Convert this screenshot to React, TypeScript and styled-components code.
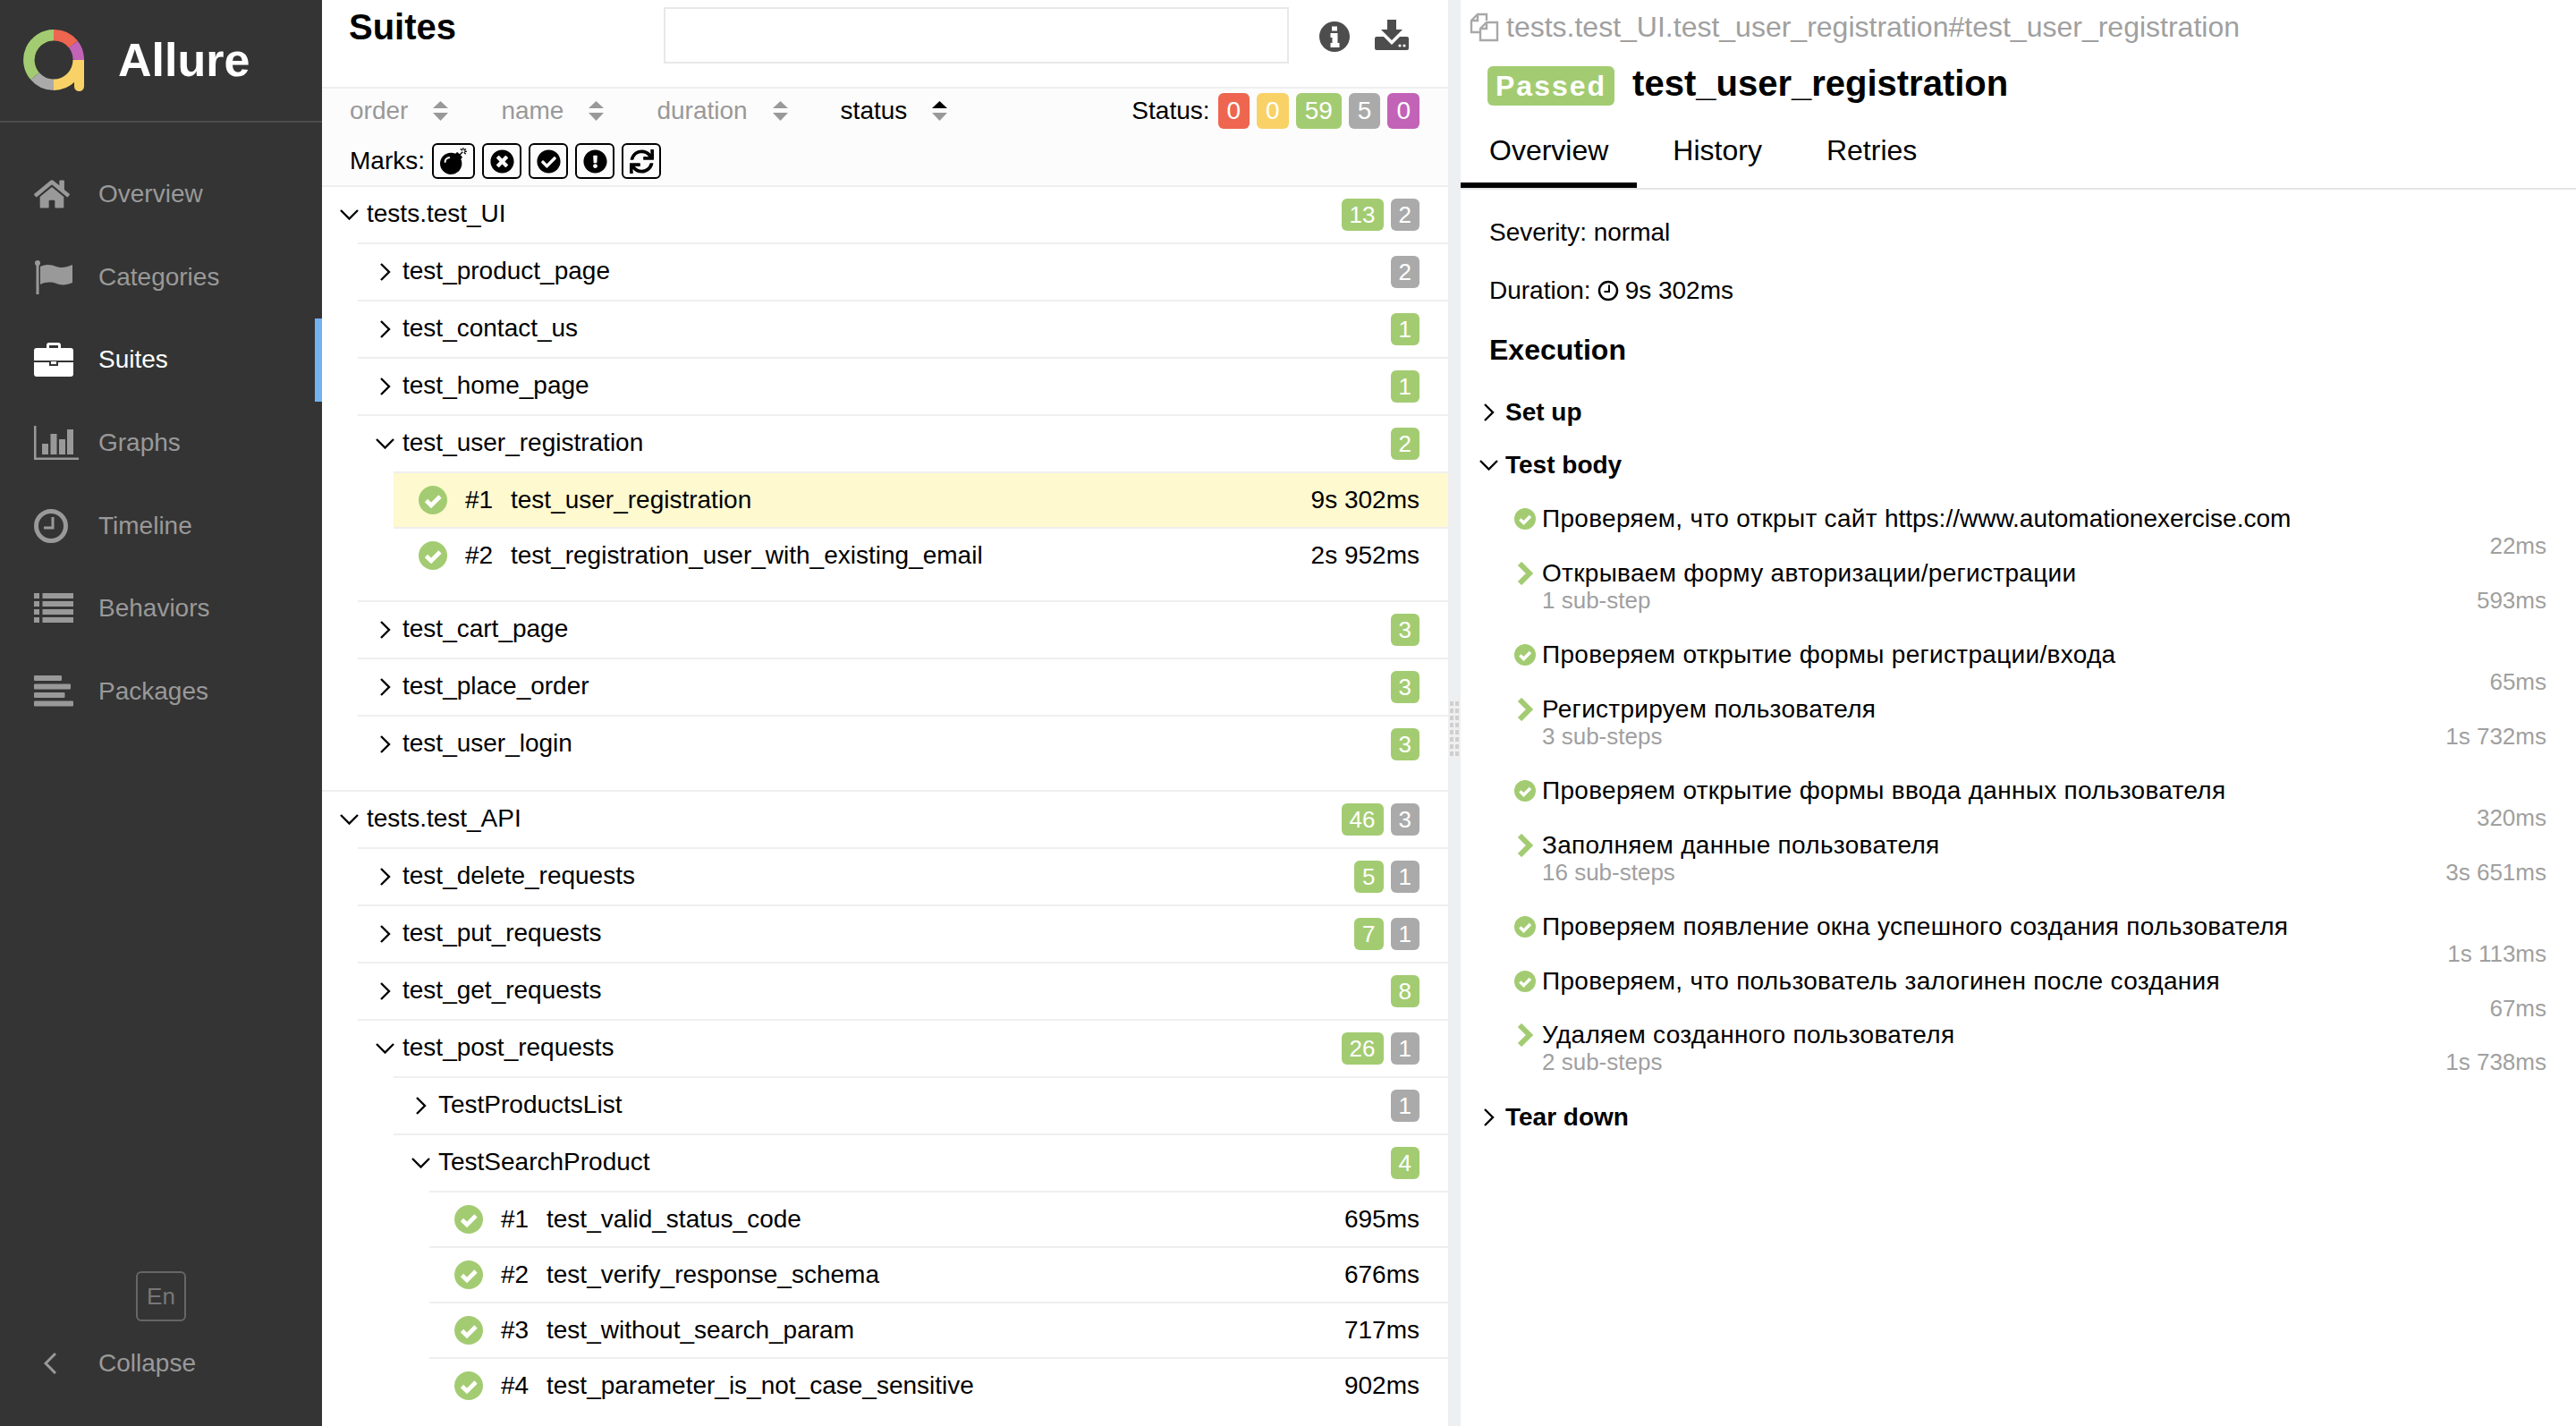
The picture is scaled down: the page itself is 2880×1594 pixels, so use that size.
import React from "react";
import styled, { createGlobalStyle } from "styled-components";
import {
  FaBomb,
  FaCheckCircle,
  FaExclamationCircle,
  FaHome,
  FaSync,
  FaTimesCircle
} from "react-icons/fa";

const GREEN = "#a3cc72";
const GREY = "#aaaaaa";
const RED = "#ee6650";
const YELLOW = "#f9d267";
const PURPLE = "#c263b8";
const LINE = "#efefef";

const GlobalStyle = createGlobalStyle`
  html, body {
    margin: 0;
    padding: 0;
    background: #fff;
  }
  body {
    font-family: "Liberation Sans", Arial, sans-serif;
    font-size: 28px;
    color: #000;
  }
`;

const Page = styled.div`
  display: flex;
  width: 2880px;
  height: 1594px;
  overflow: hidden;
`;

/* side menu */
const Sidebar = styled.aside`
  flex: 0 0 360px;
  display: flex;
  flex-direction: column;
  background: #343434;
  color: #999;
`;

const Brand = styled.div`
  display: flex;
  align-items: center;
  height: 135px;
  padding-left: 26px;
  border-bottom: 2px solid #4c4c4c;
`;

const BrandName = styled.span`
  margin-left: 38px;
  margin-bottom: 2px;
  font-size: 52px;
  font-weight: bold;
  color: #fff;
`;

const Nav = styled.nav`
  padding-top: 34px;
`;

const NavItem = styled.div<{ $active?: boolean }>`
  display: flex;
  align-items: center;
  height: 92.6px;
  box-sizing: border-box;
  padding-left: 38px;
  color: ${p => (p.$active ? "#fff" : "#999")};
  border-right: 8px solid ${p => (p.$active ? "#73b2ef" : "transparent")};
`;

const NavIcon = styled.span`
  display: flex;
  align-items: center;
  width: 72px;
  svg {
    display: block;
  }
`;

const SideFooter = styled.div`
  margin-top: auto;
  padding-bottom: 47px;
`;

const Lang = styled.div`
  width: 56px;
  height: 56px;
  box-sizing: border-box;
  margin: 0 0 24px 152px;
  display: flex;
  align-items: center;
  justify-content: center;
  border: 2px solid #666;
  border-radius: 6px;
  color: #777;
  font-size: 26px;
`;

const Collapse = styled.div`
  display: flex;
  align-items: center;
  height: 46px;
  padding-left: 49px;
  svg {
    margin-right: 47px;
  }
`;

/* suites tree */
const TreePane = styled.section`
  flex: 0 0 1259px;
  overflow: hidden;
`;

const PaneHead = styled.header`
  display: flex;
  align-items: flex-start;
  height: 89px;
  padding: 8px 0 0 30px;
`;

const PaneTitle = styled.h2`
  width: 352px;
  margin: 0;
  font-size: 40px;
  line-height: 44px;
  font-weight: bold;
`;

const Search = styled.input`
  width: 699px;
  height: 63px;
  box-sizing: border-box;
  padding: 0;
  border: 2px solid #e8e8e8;
  background: #fff;
  outline: none;
`;

const HeadIcon = styled.span<{ $left: number; $top: number }>`
  display: block;
  margin-left: ${p => p.$left}px;
  margin-top: ${p => p.$top}px;
  svg {
    display: block;
  }
`;

const Filters = styled.div`
  height: 108px;
  padding: 0 32px 0 31px;
  background: #fcfcfc;
  border-top: 2px solid ${LINE};
`;

const SortRow = styled.div`
  display: flex;
  align-items: center;
  height: 50px;
`;

const MarksRow = styled.div`
  display: flex;
  align-items: center;
  height: 40px;
  margin-top: 11px;
`;

const SortItem = styled.span<{ $active?: boolean }>`
  display: flex;
  align-items: center;
  margin-right: 59px;
  color: ${p => (p.$active ? "#000" : "#999")};
  svg {
    margin-left: 28px;
  }
`;

const StatusLabel = styled.span`
  margin-left: auto;
  margin-right: 1px;
`;

const StatusBadge = styled.span<{ $color: string }>`
  height: 40px;
  padding: 0 10px;
  margin-left: 8px;
  border-radius: 6px;
  background: ${p => p.$color};
  color: #fff;
  line-height: 40px;
`;

const MarkButton = styled.span<{ $wide?: boolean }>`
  display: flex;
  align-items: center;
  justify-content: center;
  width: ${p => (p.$wide ? 48 : 44)}px;
  height: 40px;
  box-sizing: border-box;
  margin-left: 8px;
  border: 2px solid #000;
  border-radius: 6px;
`;

const Row = styled.div`
  display: flex;
  align-items: center;
  height: 62px;
  padding-right: 32px;
  border-top: 2px solid ${LINE};
`;

const Caret = styled.span`
  display: flex;
  justify-content: center;
  width: 40px;
  margin-left: 10px;
  svg {
    display: block;
  }
`;

const RowName = styled.span`
  margin-right: auto;
  margin-top: -2px;
`;

const Counter = styled.span<{ $color: string }>`
  height: 36px;
  padding: 0 9px;
  margin-left: 8px;
  border-radius: 6px;
  background: ${p => p.$color};
  color: #fff;
  font-size: 26px;
  line-height: 36px;
`;

const Children = styled.div`
  margin: 0 0 20px 40px;
`;

const TestRow = styled.div<{ $selected?: boolean }>`
  display: flex;
  align-items: center;
  height: 60px;
  padding: 0 32px 0 28px;
  border-top: 2px solid ${LINE};
  background: ${p => (p.$selected ? "#fef9cf" : "transparent")};
`;

const TestOrder = styled.span`
  width: 51px;
  margin-left: 20px;
`;

const TestTime = styled.span`
  margin-left: auto;
`;

const Gutter = styled.div`
  position: relative;
  flex: 0 0 14px;
  background: #eeeff1;
`;

const Grip = styled.div`
  position: absolute;
  top: 784px;
  left: 2px;
  width: 10px;
  height: 61px;
  background-image: linear-gradient(#cfcfcf 5px, transparent 5px),
    linear-gradient(#cfcfcf 5px, transparent 5px);
  background-size: 4px 8px;
  background-position: 0 0, 6px 0;
  background-repeat: repeat-y;
`;

/* test result */
const Result = styled.section`
  flex: 1;
  min-width: 0;
`;

const Path = styled.div`
  display: flex;
  align-items: center;
  height: 60px;
  padding-left: 10px;
  color: #a0a0a0;
  font-size: 32px;
  svg {
    margin-right: 8px;
  }
`;

const ResultHead = styled.div`
  display: flex;
  align-items: center;
  height: 44px;
  margin-top: 14px;
  padding-left: 30px;
`;

const Passed = styled.span`
  height: 44px;
  box-sizing: border-box;
  padding: 0 9px;
  border-radius: 6px;
  background: ${GREEN};
  color: #fff;
  font-size: 32px;
  font-weight: bold;
  letter-spacing: 2px;
  line-height: 44px;
`;

const ResultName = styled.h2`
  margin: -5px 0 0 20px;
  font-size: 40px;
  font-weight: bold;
`;

const Tabs = styled.div`
  display: flex;
  height: 94px;
  box-sizing: border-box;
  border-bottom: 2px solid #e3e4e6;
`;

const Tab = styled.div<{ $active?: boolean }>`
  height: 92px;
  box-sizing: border-box;
  padding: 30px 32px 0;
  margin-right: 8px;
  font-size: 32px;
  line-height: 40px;
  border-bottom: 6px solid ${p => (p.$active ? "#000" : "transparent")};
`;

const Overview = styled.div`
  padding: 15px 33px 0 32px;
`;

const Fact = styled.div`
  height: 65px;
  display: flex;
  align-items: center;
  svg {
    margin: 0 7px;
  }
`;

const SectionTitle = styled.h3`
  margin: 14px 0 34px;
  height: 40px;
  font-size: 32px;
  line-height: 40px;
  font-weight: bold;
`;

const Stage = styled.div`
  display: flex;
  align-items: center;
  height: 31px;
  margin: 0 0 28px -20px;
  font-weight: bold;
  svg {
    display: block;
  }
`;

const StageCaret = styled.span`
  display: flex;
  justify-content: center;
  width: 38px;
`;

const Steps = styled.div`
  margin-top: -27px;
  padding: 29px 0 0 27px;
`;

const Step = styled.div<{ $hasSub?: boolean }>`
  margin-bottom: ${p => (p.$hasSub ? 31 : 0)}px;
`;

const StepTitle = styled.div`
  display: flex;
  align-items: center;
  height: 30.5px;
  letter-spacing: 0.3px;
`;

const StepUrl = styled.span`
  letter-spacing: 0;
`;

const StepMark = styled.span`
  display: flex;
  justify-content: center;
  width: 26px;
  margin-right: 6px;
  svg {
    display: block;
  }
`;

const StepMeta = styled.div`
  display: flex;
  justify-content: space-between;
  align-items: center;
  height: 30px;
  padding-left: 32px;
  color: #a0a0a0;
  font-size: 26px;
`;

const Chevron = ({ open }: { open?: boolean }) =>
  open ? (
    <svg width="21" height="12" viewBox="0 0 21 12">
      <path d="M1 1l9.500 9.500L20 1" fill="none" stroke="#000" strokeWidth="2.400" />
    </svg>
  ) : (
    <svg width="13" height="20" viewBox="0 0 13 20">
      <path d="M2 1l9 9-9 9" fill="none" stroke="#000" strokeWidth="2.400" />
    </svg>
  );

const SortArrows = ({ active }: { active?: boolean }) => (
  <svg width="17" height="22" viewBox="0 0 17 22">
    <path d="M8.500 0L17 8H0z" fill={active ? "#000" : "#999"} />
    <path d="M0 13h17l-8.500 9z" fill="#999" />
  </svg>
);

const PassIcon = ({ size }: { size: number }) => (
  <svg width={size} height={size} viewBox="0 0 32 32">
    <circle cx="16" cy="16" r="16" fill={GREEN} />
    <path d="M8.500 16.500l5.500 5.500 10-10" fill="none" stroke="#fff" strokeWidth="4.600" />
  </svg>
);

const Logo = () => (
  <svg width="68" height="69" viewBox="0 0 68 69">
    <g fill="none" strokeWidth="12.500">
      <path d="M34 6.250A27.750 27.750 0 0 1 56 16.500" stroke={RED} />
      <path d="M56 16.500A27.750 27.750 0 0 1 61.750 34" stroke={PURPLE} />
      <path d="M61.750 34A27.750 27.750 0 0 1 34 61.750" stroke={YELLOW} />
      <path d="M34 61.750A27.750 27.750 0 0 1 13 52" stroke={GREY} />
      <path d="M13 52A27.750 27.750 0 0 1 34 6.250" stroke={GREEN} />
    </g>
    <path d="M57 34h11v29.500a5.500 5.500 0 0 1-11 0z" fill={YELLOW} />
  </svg>
);

const FlagIcon = () => (
  <svg width="44" height="38" viewBox="0 0 44 38" fill="#999">
    <circle cx="4" cy="3" r="3" />
    <rect x="2.500" y="3" width="3" height="35" />
    <path d="M7 7c7-3 13-2 18 0s11 1 18-2v20c-7 3-13 3-18 1S13 24 7 27z" />
  </svg>
);

const BriefcaseIcon = () => (
  <svg width="44" height="38" viewBox="0 0 44 38" fill="#fff">
    <path d="M14 7V3a3 3 0 0 1 3-3h10a3 3 0 0 1 3 3v4h-3V3H17v4z" />
    <path d="M3 6h38a3 3 0 0 1 3 3v11H0V9a3 3 0 0 1 3-3z" />
    <path d="M0 22h17v4h10v-4h17v13a3 3 0 0 1-3 3H3a3 3 0 0 1-3-3z" />
    <rect x="19" y="21" width="6" height="3" />
  </svg>
);

const ChartIcon = () => (
  <svg width="50" height="38" viewBox="0 0 50 38" fill="#999">
    <rect x="0" y="0" width="2.500" height="38" />
    <rect x="0" y="35.500" width="50" height="2.500" />
    <rect x="9" y="20" width="7" height="12" />
    <rect x="18.500" y="9" width="7" height="23" />
    <rect x="28" y="15" width="7" height="17" />
    <rect x="37" y="4" width="7" height="28" />
  </svg>
);

const ClockIcon = () => (
  <svg width="38" height="38" viewBox="0 0 38 38" fill="none" stroke="#999">
    <circle cx="19" cy="19" r="16.500" strokeWidth="5" />
    <path d="M21 9v12H11" strokeWidth="3" />
  </svg>
);

const ListIcon = () => (
  <svg width="44" height="35" viewBox="0 0 44 35" fill="#999">
    {[0, 9, 18, 27].map(y => (
      <g key={y}>
        <rect x="0" y={y} width="6" height="6" />
        <rect x="9.500" y={y} width="34.500" height="6" />
      </g>
    ))}
  </svg>
);

const PackagesIcon = () => (
  <svg width="44" height="35" viewBox="0 0 44 35" fill="#999">
    <rect x="0" y="0" width="31" height="6" rx="1" />
    <rect x="0" y="9.500" width="41" height="6" rx="1" />
    <rect x="0" y="19" width="34.500" height="6" rx="1" />
    <rect x="0" y="28.500" width="44" height="6" rx="1" />
  </svg>
);

const InfoIcon = () => (
  <svg width="34" height="34" viewBox="0 0 34 34">
    <circle cx="17" cy="17" r="17" fill="#4d4d4d" />
    <path
      d="M14 5.500h6v5h-6zM12.500 13h8v11h2v5h-10v-5h2v-6h-2z"
      fill="#fff"
    />
  </svg>
);

const DownloadIcon = () => (
  <svg width="38" height="34" viewBox="0 0 38 34" fill="#4d4d4d">
    <path d="M14 0h10v11h7L19 23 7 11h7z" />
    <path d="M2 19h8l9 9 9-9h8a2 2 0 0 1 2 2v11a2 2 0 0 1-2 2H2a2 2 0 0 1-2-2V21a2 2 0 0 1 2-2z" />
    <circle cx="28" cy="29" r="1.600" fill="#fff" />
    <circle cx="33" cy="29" r="1.600" fill="#fff" />
  </svg>
);

const CopyIcon = () => (
  <svg width="33" height="33" viewBox="0 0 33 33" fill="none" stroke="#a8a8a8" strokeWidth="2.400">
    <path d="M19 9V2H9L2 9v13h9" />
    <path d="M9 2v7H2" />
    <path d="M31 11v20H12V18l7-7z" fill="#fff" />
    <path d="M19 11v7h-7" />
  </svg>
);

const SmallClock = () => (
  <svg width="24" height="24" viewBox="0 0 24 24" fill="none" stroke="#000">
    <circle cx="12" cy="12" r="10" strokeWidth="2.500" />
    <path d="M13 5.500V13H7.500" strokeWidth="2" />
  </svg>
);

type Test = { order: number; name: string; time: string; selected?: boolean };

type Suite = {
  name: string;
  passed?: number;
  skipped?: number;
  children?: Suite[];
  tests?: Test[];
};

type StepData = { name: string; url?: string; time: string; sub?: string };

const SUITES: Suite[] = [
  {
    name: "tests.test_UI",
    passed: 13,
    skipped: 2,
    children: [
      { name: "test_product_page", skipped: 2 },
      { name: "test_contact_us", passed: 1 },
      { name: "test_home_page", passed: 1 },
      {
        name: "test_user_registration",
        passed: 2,
        tests: [
          { order: 1, name: "test_user_registration", time: "9s 302ms", selected: true },
          { order: 2, name: "test_registration_user_with_existing_email", time: "2s 952ms" }
        ]
      },
      { name: "test_cart_page", passed: 3 },
      { name: "test_place_order", passed: 3 },
      { name: "test_user_login", passed: 3 }
    ]
  },
  {
    name: "tests.test_API",
    passed: 46,
    skipped: 3,
    children: [
      { name: "test_delete_requests", passed: 5, skipped: 1 },
      { name: "test_put_requests", passed: 7, skipped: 1 },
      { name: "test_get_requests", passed: 8 },
      {
        name: "test_post_requests",
        passed: 26,
        skipped: 1,
        children: [
          { name: "TestProductsList", skipped: 1 },
          {
            name: "TestSearchProduct",
            passed: 4,
            tests: [
              { order: 1, name: "test_valid_status_code", time: "695ms" },
              { order: 2, name: "test_verify_response_schema", time: "676ms" },
              { order: 3, name: "test_without_search_param", time: "717ms" },
              { order: 4, name: "test_parameter_is_not_case_sensitive", time: "902ms" }
            ]
          }
        ]
      }
    ]
  }
];

const STEPS: StepData[] = [
  { name: "Проверяем, что открыт сайт ", url: "https://www.automationexercise.com", time: "22ms" },
  { name: "Открываем форму авторизации/регистрации", time: "593ms", sub: "1 sub-step" },
  { name: "Проверяем открытие формы регистрации/входа", time: "65ms" },
  { name: "Регистрируем пользователя", time: "1s 732ms", sub: "3 sub-steps" },
  { name: "Проверяем открытие формы ввода данных пользователя", time: "320ms" },
  { name: "Заполняем данные пользователя", time: "3s 651ms", sub: "16 sub-steps" },
  { name: "Проверяем появление окна успешного создания пользователя", time: "1s 113ms" },
  { name: "Проверяем, что пользователь залогинен после создания", time: "67ms" },
  { name: "Удаляем созданного пользователя", time: "1s 738ms", sub: "2 sub-steps" }
];

const NAV = [
  { label: "Overview", icon: <FaHome size={40} color="#999" /> },
  { label: "Categories", icon: <FlagIcon /> },
  { label: "Suites", icon: <BriefcaseIcon />, active: true },
  { label: "Graphs", icon: <ChartIcon /> },
  { label: "Timeline", icon: <ClockIcon /> },
  { label: "Behaviors", icon: <ListIcon /> },
  { label: "Packages", icon: <PackagesIcon /> }
];

const SuiteNode = ({ suite }: { suite: Suite }) => {
  const open = !!(suite.children || suite.tests);
  return (
    <div>
      <Row>
        <Caret>
          <Chevron open={open} />
        </Caret>
        <RowName>{suite.name}</RowName>
        {suite.passed ? <Counter $color={GREEN}>{suite.passed}</Counter> : null}
        {suite.skipped ? <Counter $color={GREY}>{suite.skipped}</Counter> : null}
      </Row>
      {open && (
        <Children>
          {suite.children?.map(child => (
            <SuiteNode key={child.name} suite={child} />
          ))}
          {suite.tests?.map(test => (
            <TestRow key={test.name} $selected={test.selected}>
              <PassIcon size={32} />
              <TestOrder>#{test.order}</TestOrder>
              <span>{test.name}</span>
              <TestTime>{test.time}</TestTime>
            </TestRow>
          ))}
        </Children>
      )}
    </div>
  );
};

const App = () => (
  <Page>
    <GlobalStyle />
    <Sidebar>
      <Brand>
        <Logo />
        <BrandName>Allure</BrandName>
      </Brand>
      <Nav>
        {NAV.map(item => (
          <NavItem key={item.label} $active={item.active}>
            <NavIcon>{item.icon}</NavIcon>
            {item.label}
          </NavItem>
        ))}
      </Nav>
      <SideFooter>
        <Lang>En</Lang>
        <Collapse>
          <svg width="14" height="24" viewBox="0 0 14 24">
            <path d="M13 1L2 12l11 11" fill="none" stroke="#999" strokeWidth="3" />
          </svg>
          Collapse
        </Collapse>
      </SideFooter>
    </Sidebar>

    <TreePane>
      <PaneHead>
        <PaneTitle>Suites</PaneTitle>
        <Search />
        <HeadIcon $left={34} $top={16}>
          <InfoIcon />
        </HeadIcon>
        <HeadIcon $left={28} $top={14}>
          <DownloadIcon />
        </HeadIcon>
      </PaneHead>
      <Filters>
        <SortRow>
          <SortItem>
            order
            <SortArrows />
          </SortItem>
          <SortItem>
            name
            <SortArrows />
          </SortItem>
          <SortItem>
            duration
            <SortArrows />
          </SortItem>
          <SortItem $active>
            status
            <SortArrows active />
          </SortItem>
          <StatusLabel>Status:</StatusLabel>
          <StatusBadge $color={RED}>0</StatusBadge>
          <StatusBadge $color={YELLOW}>0</StatusBadge>
          <StatusBadge $color={GREEN}>59</StatusBadge>
          <StatusBadge $color={GREY}>5</StatusBadge>
          <StatusBadge $color={PURPLE}>0</StatusBadge>
        </SortRow>
        <MarksRow>
          Marks:
          <MarkButton $wide>
            <FaBomb size={30} />
          </MarkButton>
          <MarkButton>
            <FaTimesCircle size={27} />
          </MarkButton>
          <MarkButton>
            <FaCheckCircle size={27} />
          </MarkButton>
          <MarkButton>
            <FaExclamationCircle size={27} />
          </MarkButton>
          <MarkButton>
            <FaSync size={27} />
          </MarkButton>
        </MarksRow>
      </Filters>
      {SUITES.map(suite => (
        <SuiteNode key={suite.name} suite={suite} />
      ))}
    </TreePane>

    <Gutter>
      <Grip />
    </Gutter>

    <Result>
      <Path>
        <CopyIcon />
        tests.test_UI.test_user_registration#test_user_registration
      </Path>
      <ResultHead>
        <Passed>Passed</Passed>
        <ResultName>test_user_registration</ResultName>
      </ResultHead>
      <Tabs>
        <Tab $active>Overview</Tab>
        <Tab>History</Tab>
        <Tab>Retries</Tab>
      </Tabs>
      <Overview>
        <Fact>Severity: normal</Fact>
        <Fact>
          Duration:
          <SmallClock />
          9s 302ms
        </Fact>
        <SectionTitle>Execution</SectionTitle>
        <Stage>
          <StageCaret>
            <Chevron />
          </StageCaret>
          Set up
        </Stage>
        <Stage>
          <StageCaret>
            <Chevron open />
          </StageCaret>
          Test body
        </Stage>
        <Steps>
          {STEPS.map(step => (
            <Step key={step.name} $hasSub={!!step.sub}>
              <StepTitle>
                <StepMark>
                  {step.sub ? (
                    <svg width="18" height="26" viewBox="0 0 18 26">
                      <path d="M3 2l11 11L3 24" fill="none" stroke={GREEN} strokeWidth="6" />
                    </svg>
                  ) : (
                    <PassIcon size={24} />
                  )}
                </StepMark>
                <span>
                  {step.name}
                  {step.url && <StepUrl>{step.url}</StepUrl>}
                </span>
              </StepTitle>
              <StepMeta>
                <span>{step.sub}</span>
                <span>{step.time}</span>
              </StepMeta>
            </Step>
          ))}
        </Steps>
        <Stage>
          <StageCaret>
            <Chevron />
          </StageCaret>
          Tear down
        </Stage>
      </Overview>
    </Result>
  </Page>
);

export default App;
